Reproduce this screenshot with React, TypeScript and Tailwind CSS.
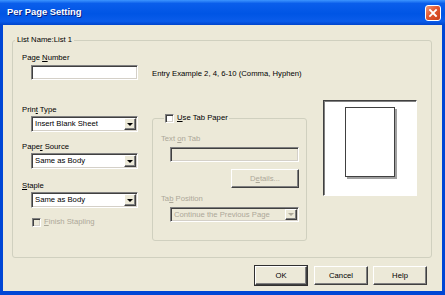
import type { ReactNode } from "react";

const sunken =
  "border border-t-[#808080] border-l-[#808080] border-b-white border-r-white shadow-[inset_1px_1px_0_#404040,inset_-1px_-1px_0_#D4D0C8]";
const raised =
  "border border-t-white border-l-white border-b-[#404040] border-r-[#404040] shadow-[inset_-1px_-1px_0_#808080]";

const Label = ({ children, disabled }: { children: ReactNode; disabled?: boolean }) => (
  <div className={`leading-[10px] h-[10px] ${disabled ? "text-[#ACA899]" : "text-black"}`}>{children}</div>
);

const Combo = ({ value, disabled, className }: { value: string; disabled?: boolean; className: string }) => (
  <div className={`${sunken} ${className} flex items-stretch ${disabled ? "bg-[#ECE9D8]" : "bg-white"}`}>
    <div className={`flex-1 flex items-center pl-[3px] leading-[10px] ${disabled ? "text-[#ACA899]" : "text-black"}`}>
      {value}
    </div>
    <div className={`${raised} w-[12px] my-[1px] mr-[1px] bg-[#ECE9D8] flex items-center justify-center`}>
      <div
        className={`w-0 h-0 border-l-[3px] border-r-[3px] border-t-[3px] border-l-transparent border-r-transparent ${
          disabled ? "border-t-[#ACA899]" : "border-t-black"
        }`}
      />
    </div>
  </div>
);

const Check = ({ disabled }: { disabled?: boolean }) => (
  <div className={`${sunken} w-[9px] h-[9px] ${disabled ? "bg-[#ECE9D8]" : "bg-white"}`} />
);

const Button = ({ children, className, main }: { children: ReactNode; className: string; main?: boolean }) => (
  <div
    className={`${className} h-[19px] flex items-center justify-center bg-[#ECE9D8] ${
      main ? "outline outline-1 outline-[#303030]" : ""
    } ${raised}`}
  >
    {children}
  </div>
);

export default function App() {
  return (
    <div className="w-[445px] h-[295px] flex flex-col bg-[#0046D5] font-['Liberation_Sans',Arial,sans-serif] text-[7.7px] overflow-hidden">
      {/* Title bar */}
      <div className="h-[25px] shrink-0 flex items-center justify-between pl-[7px] pr-[4px] bg-[linear-gradient(to_bottom,#3D95FF_0%,#0A5EEB_14%,#0055E5_55%,#0A5CEA_85%,#0045CC_100%)]">
        <span className="text-white font-bold text-[9.4px] [text-shadow:1px_1px_0_#0A1F80]">
          Per Page Setting
        </span>
        <div className="w-[16px] h-[16px] rounded-[3px] border border-white bg-[linear-gradient(135deg,#F09A7A,#E2572F_45%,#C9401A)] flex items-center justify-center">
          <svg width="10" height="10" viewBox="0 0 10 10">
            <path d="M2 2 L8 8 M8 2 L2 8" stroke="white" strokeWidth="1.8" strokeLinecap="square" />
          </svg>
        </div>
      </div>

      {/* Body */}
      <div className="flex-1 mx-[3px] mb-[4px] bg-[#ECE9D8] pl-[9px] pr-[10px] pt-[10px] flex flex-col">
        <fieldset className="border border-[#D0D0BF] rounded-[3px] pl-[9px] h-[223px]">
          <legend className="-ml-[7px] px-[2px] leading-[10px]">List Name:List 1</legend>

          <div className="flex items-end pt-[8px]">
            <div className="w-[116px]">
              <Label>
                Page <span className="underline">N</span>umber
              </Label>
              <div className={`${sunken} mt-[2px] ml-[9px] w-[107px] h-[15px] bg-white`} />
            </div>
            <div className="ml-[14px] mb-[1px] leading-[10px]">Entry Example 2, 4, 6-10 (Comma, Hyphen)</div>
          </div>

          <div className="flex items-start">
            {/* left column */}
            <div className="w-[116px] pt-[25px] flex flex-col">
              <Label>
                Prin<span className="underline">t</span> Type
              </Label>
              <Combo value="Insert Blank Sheet" className="mt-[1px] ml-[9px] h-[16px]" />
              <div className="mt-[10px]">
                <Label>
                  Pape<span className="underline">r</span> Source
                </Label>
              </div>
              <Combo value="Same as Body" className="mt-[1px] ml-[9px] h-[16px]" />
              <div className="mt-[12px]">
                <Label>
                  <span className="underline">S</span>taple
                </Label>
              </div>
              <Combo value="Same as Body" className="mt-[1px] ml-[9px] h-[16px]" />
              <div className="mt-[9px] ml-[10px] flex items-center gap-[3px] text-[#ACA899] leading-[10px]">
                <Check disabled />
                <span>
                  <span className="underline">F</span>inish Stapling
                </span>
              </div>
            </div>

            {/* tab paper group */}
            <fieldset className="ml-[14px] mt-[33px] w-[155px] h-[128px] border border-[#D0D0BF] rounded-[3px] pl-[8px] pr-[7px] flex flex-col">
              <legend className="ml-[3px] px-[1px] flex items-center gap-[3px] leading-[10px]">
                <Check />
                <span>
                  <span className="underline">U</span>se Tab Paper
                </span>
              </legend>
              <div className="pt-[11px]">
                <Label disabled>
                  Text <span className="underline">o</span>n Tab
                </Label>
              </div>
              <div className={`${sunken} mt-[3px] ml-[9px] h-[15px] bg-[#ECE9D8]`} />
              <div className="mt-[7px] flex justify-end">
                <Button className="w-[68px] h-[16px] text-[#ACA899]">
                  <span>
                    D<span className="underline">e</span>tails...
                  </span>
                </Button>
              </div>
              <div className="mt-[6px]">
                <Label disabled>
                  Ta<span className="underline">b</span> Position
                </Label>
              </div>
              <Combo value="Continue the Previous Page" disabled className="mt-[3px] ml-[9px] h-[15px]" />
            </fieldset>

            {/* preview */}
            <div className="ml-[16px] mt-[20px] w-[94px] h-[96px] bg-white border border-t-[#404040] border-l-[#404040] border-b-white border-r-white shadow-[inset_1px_1px_0_#808080] flex justify-center pt-[6px]">
              <div className="w-[50px] h-[70px] bg-white border border-[#404040] shadow-[2px_2px_0_#A0A0A0]" />
            </div>
          </div>
        </fieldset>

        {/* buttons */}
        <div className="mt-[8px] flex justify-end pr-[5px]">
          <Button main className="w-[52px]">
            OK
          </Button>
          <Button className="w-[54px] ml-[7px]">Cancel</Button>
          <Button className="w-[54px] ml-[5px]">Help</Button>
        </div>
      </div>
    </div>
  );
}
